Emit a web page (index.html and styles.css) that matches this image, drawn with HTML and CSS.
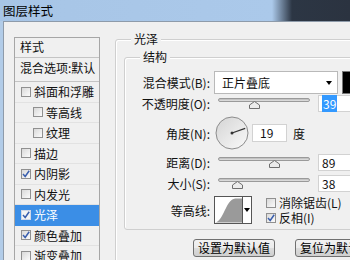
FILE: index.html
```html
<!DOCTYPE html>
<html lang="zh-CN">
<head>
  <meta charset="UTF-8" />
  <title>图层样式</title>
  <link rel="stylesheet" href="styles.css">
</head>
<body>
  <div class="titlebar"><span class="title">图层样式</span></div>

  <div class="client">
    <div class="styles-list">
      <div class="list-head">样式</div>
      <div class="list-blend">混合选项:默认</div>
      <div class="list-item"><span class="cb"></span>斜面和浮雕</div>
      <div class="list-item sub"><span class="cb"></span>等高线</div>
      <div class="list-item sub"><span class="cb"></span>纹理</div>
      <div class="list-item"><span class="cb"></span>描边</div>
      <div class="list-item"><span class="cb checked"><svg viewBox="0 0 10 10"><path d="M2 5 L4.2 7.5 L8.2 1.8" /></svg></span>内阴影</div>
      <div class="list-item"><span class="cb"></span>内发光</div>
      <div class="list-item selected"><span class="cb checked"><svg viewBox="0 0 10 10"><path d="M2 5 L4.2 7.5 L8.2 1.8" /></svg></span>光泽</div>
      <div class="list-item"><span class="cb checked"><svg viewBox="0 0 10 10"><path d="M2 5 L4.2 7.5 L8.2 1.8" /></svg></span>颜色叠加</div>
      <div class="list-item"><span class="cb"></span>渐变叠加</div>
    </div>

    <div class="panel">
      <div class="group outer">
        <span class="legend">光泽</span>

        <div class="group inner">
          <span class="legend">结构</span>

          <div class="row row-mode">
            <label class="lbl">混合模式(B):</label>
            <div class="select">
              <span>正片叠底</span>
              <span class="arrow"></span>
            </div>
            <div class="swatch"></div>
          </div>

          <div class="row row-opacity">
            <label class="lbl">不透明度(O):</label>
            <div class="slider">
              <div class="track"></div>
              <svg class="thumb" style="left: 35px" viewBox="0 0 11 8"><polygon points="5.5,0.5 10.5,4 10.5,7.5 0.5,7.5 0.5,4" /></svg>
            </div>
            <div class="num"><span class="hl">39</span></div>
          </div>

          <div class="row row-angle">
            <label class="lbl">角度(N):</label>
            <svg class="dial" viewBox="0 0 34 34">
              <defs>
                <linearGradient id="dialFill" x1="0" y1="0" x2="1" y2="1">
                  <stop offset="0" stop-color="#d4d4d4" />
                  <stop offset="1" stop-color="#fafafa" />
                </linearGradient>
              </defs>
              <circle cx="17" cy="17" r="16" fill="url(#dialFill)" stroke="#8c8c8c" />
              <line x1="17" y1="17" x2="30.2" y2="12.4" stroke="#333" stroke-width="1.2" />
              <circle cx="17" cy="17" r="1.5" fill="#333" />
            </svg>
            <div class="num angle">19</div>
            <span class="unit">度</span>
          </div>

          <div class="row row-distance">
            <label class="lbl">距离(D):</label>
            <div class="slider">
              <div class="track"></div>
              <svg class="thumb" style="left: 55px" viewBox="0 0 11 8"><polygon points="5.5,0.5 10.5,4 10.5,7.5 0.5,7.5 0.5,4" /></svg>
            </div>
            <div class="num">89</div>
          </div>

          <div class="row row-size">
            <label class="lbl">大小(S):</label>
            <div class="slider">
              <div class="track"></div>
              <svg class="thumb" style="left: 18px" viewBox="0 0 11 8"><polygon points="5.5,0.5 10.5,4 10.5,7.5 0.5,7.5 0.5,4" /></svg>
            </div>
            <div class="num">38</div>
          </div>

          <div class="row row-contour">
            <label class="lbl">等高线:</label>
            <div class="contour">
              <svg class="curve" viewBox="0 0 28 26">
                <path d="M0 26 C 9 25 11 2 21 1 L28 1 L28 26 Z" fill="#9a9a9a" />
              </svg>
              <div class="drop"><span class="arrow"></span></div>
            </div>
            <div class="checks">
              <div class="check"><span class="cb"></span>消除锯齿(L)</div>
              <div class="check"><span class="cb checked"><svg viewBox="0 0 10 10"><path d="M2 5 L4.2 7.5 L8.2 1.8" /></svg></span>反相(I)</div>
            </div>
          </div>
        </div>

        <div class="buttons">
          <button class="btn">设置为默认值</button>
          <button class="btn">复位为默认值</button>
        </div>
      </div>
    </div>
  </div>
</body>
</html>
```

FILE: styles.css
```css
body {
  margin: 0;
  width: 350px;
  height: 260px;
  overflow: hidden;
  font-family: "Noto Sans CJK SC", "Noto Sans", sans-serif;
  font-size: 12px;
  color: #111;
  background: #b2cce8;
}

.titlebar {
  height: 21px;
  background: linear-gradient(to right, #a7c5e6 0, #abc9ea 272px, #2c3644 292px, #2b3340 100%);
}

.title {
  display: block;
  padding-left: 3px;
  line-height: 21px;
  font-size: 12.5px;
  color: #000;
}

.client {
  display: flex;
  margin-left: 3px;
  height: 239px;
  background: #f0f0f0;
  border-left: 1px solid #8e9baa;
  border-top: 1px solid #8e9baa;
}

/* left list */
.styles-list {
  width: 84px;
  margin: 15px 0 0 10px;
  border: 1px solid #a6a6a6;
  border-bottom: none;
  background: #f0f0f0;
  flex-shrink: 0;
}

.list-head {
  height: 19px;
  line-height: 17px;
  padding-left: 5px;
  border-bottom: 1px solid #c4c4c4;
}

.list-blend {
  height: 23px;
  line-height: 19px;
  padding-left: 5px;
  border-bottom: 1px solid #c4c4c4;
  white-space: nowrap;
}

.list-item {
  box-sizing: border-box;
  height: 20.5px;
  display: flex;
  align-items: center;
  padding-left: 6px;
  border-bottom: 1px solid #e2e2e2;
  white-space: nowrap;
}

.list-item.sub {
  padding-left: 18px;
}

.list-item.selected {
  background: #3b8ee6;
  color: #fff;
  border-bottom-color: #3b8ee6;
}

.cb {
  box-sizing: border-box;
  width: 10px;
  height: 10px;
  margin-right: 3px;
  border: 1px solid #909090;
  background: linear-gradient(135deg, #d9d9d9, #fbfbfb);
  flex-shrink: 0;
  display: flex;
}

.cb svg {
  width: 10px;
  height: 10px;
  margin: -1px;
}

.cb svg path {
  fill: none;
  stroke: #3a5fae;
  stroke-width: 1.5;
}

.selected .cb {
  background: #f4f4f4;
  border-color: #d0d8e8;
}

/* right panel */
.panel {
  margin: 17px 0 0 15px;
}

.group {
  position: relative;
  border: 1px solid #cfcfcf;
  border-radius: 3px;
  box-shadow: inset 1px 1px 0 #fff;
}

.outer {
  width: 300px;
  height: 240px;
  padding: 17px 0 0 8px;
  box-sizing: border-box;
}

.inner {
  width: 300px;
  padding: 13px 0 5px 0;
}

.legend {
  position: absolute;
  top: -9px;
  left: 15px;
  padding: 0 3px;
  background: #f0f0f0;
  line-height: 16px;
}

.row {
  display: flex;
  align-items: center;
}

.lbl {
  width: 85px;
  margin-right: 4px;
  text-align: right;
  white-space: nowrap;
  flex-shrink: 0;
}

.row-mode { height: 23px; }
.row-opacity { height: 18px; }
.row-angle { height: 38px; margin-top: 2px; }
.row-distance { height: 20px; }
.row-size { height: 20px; margin-top: 1px; }
.row-contour { height: 28px; margin-top: 3px; }

.select {
  box-sizing: border-box;
  width: 124px;
  height: 23px;
  display: flex;
  align-items: center;
  justify-content: space-between;
  padding: 0 5px 0 7px;
  background: #fff;
  border: 1px solid #b9b9b9;
}

.arrow {
  width: 0;
  height: 0;
  border-left: 3.5px solid transparent;
  border-right: 3.5px solid transparent;
  border-top: 4px solid #000;
}

.swatch {
  width: 20px;
  height: 23px;
  margin-left: 4px;
  box-sizing: border-box;
  background: #000;
  border: 1px solid #777;
}

.slider {
  position: relative;
  width: 96px;
  height: 14px;
  flex-shrink: 0;
}

.track {
  margin: 2px 0 0 4px;
  height: 4px;
  border: 1px solid #9a9a9a;
  border-radius: 2px;
  background: linear-gradient(#b8b8b8, #e4e4e4);
  box-sizing: border-box;
}

.thumb {
  position: absolute;
  top: 5px;
  width: 11px;
  height: 8px;
}

.thumb polygon {
  fill: #ececec;
  stroke: #6f6f6f;
  stroke-width: 1;
}

.num {
  box-sizing: border-box;
  width: 40px;
  height: 17px;
  margin-left: 8px;
  padding-left: 3px;
  line-height: 15px;
  background: #fff;
  border: 1px solid #d2d2d2;
  border-right: none;
}

.hl {
  background: #3399ff;
  color: #fff;
  padding: 0 1px;
}

.dial {
  width: 34px;
  height: 34px;
  margin-left: 1px;
  flex-shrink: 0;
}

.num.angle {
  width: 35px;
  height: 18px;
  margin-left: 3px;
  padding-left: 7px;
  line-height: 16px;
  border-right: 1px solid #d2d2d2;
}

.unit {
  margin-left: 6px;
}

.contour {
  display: flex;
  box-sizing: border-box;
  width: 38px;
  height: 28px;
  border: 1px solid #555;
  background: #fff;
}

.curve {
  width: 27px;
  height: 26px;
}

.drop {
  flex: 1;
  display: flex;
  align-items: center;
  justify-content: center;
  border-left: 1px solid #555;
}

.checks {
  margin-left: 14px;
  display: flex;
  flex-direction: column;
  gap: 1px;
}

.check {
  display: flex;
  align-items: center;
  height: 14px;
  line-height: 14px;
  white-space: nowrap;
}

.buttons {
  display: flex;
  gap: 20px;
  margin: 9px 0 0 69px;
}

.btn {
  width: 82px;
  height: 18px;
  padding: 0;
  font-family: "Noto Sans CJK SC", "Noto Sans", sans-serif;
  font-size: 12px;
  line-height: 14px;
  color: #000;
  border: 1px solid #707070;
  border-radius: 3px;
  background: linear-gradient(#f2f2f2 0, #ebebeb 50%, #dcdcdc 50%, #cfcfcf 100%);
  flex-shrink: 0;
}
```
